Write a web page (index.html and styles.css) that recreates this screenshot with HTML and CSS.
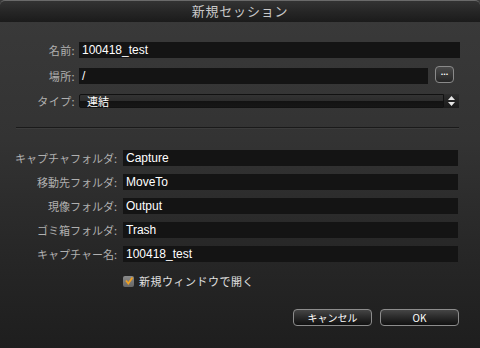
FILE: index.html
```html
<!DOCTYPE html>
<html lang="ja">
<head>
<meta charset="utf-8">
<title>新規セッション</title>
<link rel="stylesheet" href="styles.css">
</head>
<body>
<div class="window">
  <div class="titlebar">新規セッション</div>
  <div class="content">
    <div class="top">
      <div class="row">
        <span class="label">名前:</span>
        <div class="field">100418_test</div>
      </div>
      <div class="row">
        <span class="label">場所:</span>
        <div class="field field-short">/</div>
        <div class="browse">...</div>
      </div>
      <div class="row row-popup">
        <span class="label">タイプ:</span>
        <div class="popup"><span class="popup-text">連結</span></div>
        <div class="stepper">
          <svg width="9" height="12" viewBox="0 0 9 12"><path d="M4.5 1 L8 5 L1 5 Z" fill="#e6e6e6"/><path d="M1 7 L8 7 L4.5 11 Z" fill="#e6e6e6"/></svg>
        </div>
      </div>
    </div>
    <div class="sep"></div>
    <div class="folders">
      <div class="row">
        <span class="label label-wide">キャプチャフォルダ:</span>
        <div class="field">Capture</div>
      </div>
      <div class="row">
        <span class="label label-wide">移動先フォルダ:</span>
        <div class="field">MoveTo</div>
      </div>
      <div class="row">
        <span class="label label-wide">現像フォルダ:</span>
        <div class="field">Output</div>
      </div>
      <div class="row">
        <span class="label label-wide">ゴミ箱フォルダ:</span>
        <div class="field">Trash</div>
      </div>
      <div class="row">
        <span class="label label-wide">キャプチャー名:</span>
        <div class="field">100418_test</div>
      </div>
      <div class="check-row">
        <span class="checkbox">
          <svg width="10" height="10" viewBox="0 0 10 10"><path d="M2 4.5 L4.3 7.5 L8.5 1.5" fill="none" stroke="#f0a020" stroke-width="1.8"/></svg>
        </span>
        <span class="check-label">新規ウィンドウで開く</span>
      </div>
    </div>
    <div class="buttons">
      <div class="btn">キャンセル</div>
      <div class="btn">OK</div>
    </div>
  </div>
</div>
</body>
</html>
```

FILE: styles.css
```css
* { box-sizing: border-box; }
html, body {
  margin: 0;
  padding: 0;
  background: #1e1e1e;
}
.window {
  width: 480px;
  height: 348px;
  display: flex;
  flex-direction: column;
  background: linear-gradient(#3a3a3a, #333333 40%, #262626 75%, #1e1e1e);
  font-family: "Liberation Sans", "Noto Sans CJK JP", sans-serif;
  overflow: hidden;
}
.titlebar {
  height: 22px;
  flex: none;
  border-radius: 5px 5px 0 0;
  border-top: 1px solid #6a6a6a;
  background: linear-gradient(#333333, #262626 50%, #1b1b1b);
  color: #c8c8c8;
  font-family: "Noto Sans CJK JP", sans-serif;
  font-size: 13px;
  letter-spacing: 0.8px;
  text-align: center;
  line-height: 20px;
}
.content {
  flex: 1;
  display: flex;
  flex-direction: column;
  padding: 20px 21px 0 0;
}
.top {
  display: flex;
  flex-direction: column;
  gap: 10px;
}
.row {
  display: flex;
  align-items: center;
  height: 16px;
}
.label {
  width: 79px;
  flex: none;
  text-align: right;
  padding-right: 4px;
  color: #b0b0b0;
  font-family: "Noto Sans CJK JP", sans-serif;
  font-size: 11px;
  letter-spacing: 0.4px;
  line-height: 16px;
}
.label-wide {
  width: 123px;
  padding-right: 6px;
  letter-spacing: 0;
}
.field {
  flex: 1;
  height: 16px;
  background: #141414;
  color: #ffffff;
  font-size: 12px;
  line-height: 16px;
  padding-left: 3px;
  font-family: "Liberation Sans", "Noto Sans CJK JP", sans-serif;
}
.top .row:first-child .field { margin-right: -1px; }
.field-short {
  flex: none;
  width: 349px;
}
.browse {
  width: 19px;
  height: 17px;
  margin-left: 7px;
  margin-top: -3px;
  border: 1px solid #8a8a8a;
  border-radius: 4px;
  background: linear-gradient(#4a4a4a, #262626);
  color: #ffffff;
  font-size: 9px;
  font-weight: bold;
  line-height: 11px;
  text-align: center;
}
.row-popup {
  height: 14px;
}
.popup {
  flex: 1;
  height: 14px;
  border: 1px solid #111;
  border-radius: 2px 0 0 2px;
  background: linear-gradient(#333333 0%, #2c2c2c 50%, #121212 50%, #161616 100%);
  color: #ffffff;
  font-family: "Noto Sans CJK JP", sans-serif;
  font-size: 11px;
  line-height: 12px;
  padding-left: 7px;
}
.stepper {
  width: 15px;
  height: 14px;
  flex: none;
  background: linear-gradient(#2e2e2e, #1a1a1a);
  display: flex;
  align-items: center;
  justify-content: center;
}
.sep {
  background: #1a1a1a;
  border-bottom: 1px solid #3c3c3c;
  margin: 19px 0 0 16px;
  height: 2px;
}
.folders {
  display: flex;
  flex-direction: column;
  gap: 8px;
  margin-top: 21px;
}
.folders .field { margin-right: 1px; }
.check-row {
  display: flex;
  align-items: center;
  padding-left: 123px;
  margin-top: 3px;
  height: 16px;
}
.checkbox {
  width: 11px;
  height: 11px;
  border-radius: 2px;
  background: linear-gradient(#8a8a8a, #666);
  display: flex;
  align-items: center;
  justify-content: center;
}
.check-label {
  margin-left: 5px;
  color: #e0e0e0;
  font-family: "Noto Sans CJK JP", sans-serif;
  font-size: 11px;
  letter-spacing: 0.5px;
}
.buttons {
  display: flex;
  justify-content: flex-end;
  gap: 8px;
  margin-top: 20px;
}
.btn {
  width: 79px;
  height: 17px;
  border: 1px solid #8c8c8c;
  border-radius: 4px;
  background: linear-gradient(#454545, #262626 55%, #111111);
  color: #ffffff;
  font-family: "Noto Sans CJK JP", sans-serif;
  font-size: 10px;
  text-align: center;
  line-height: 15px;
}
```
